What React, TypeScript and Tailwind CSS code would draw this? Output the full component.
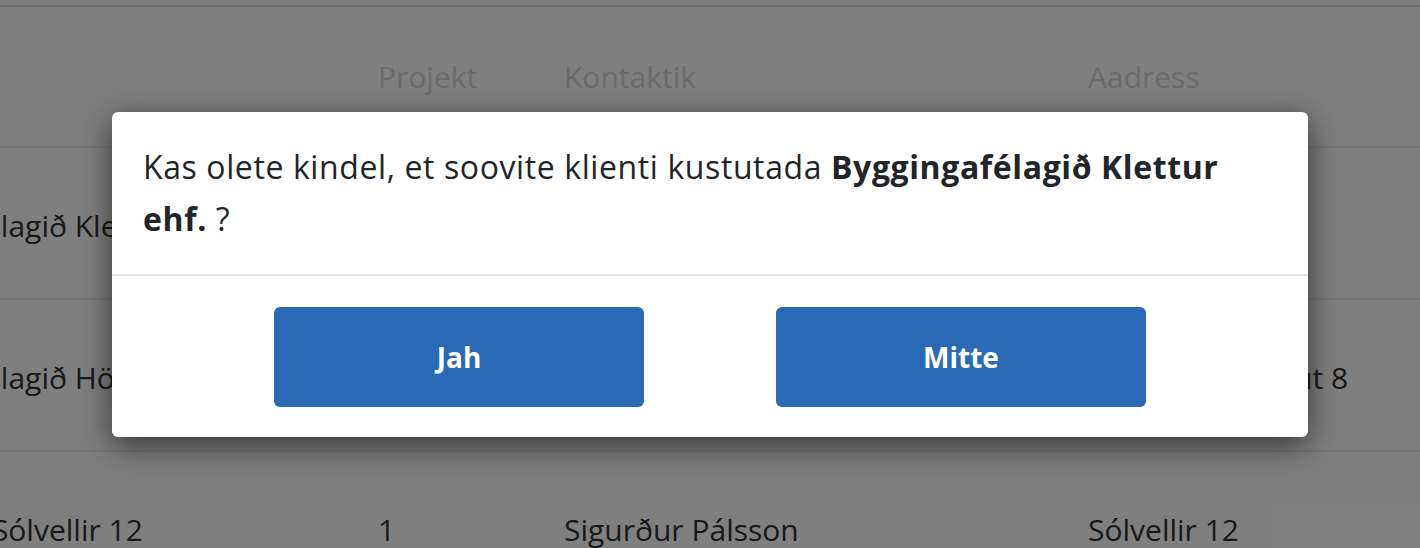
const rows = [
  { name: "Byggingafélagið Klettur ehf.", projects: "3", contact: "Jón Guðmundsson", address: "Borgartún 25" },
  { name: "Byggingafélagið Höfði ehf.", projects: "2", contact: "Anna Sigurðardóttir", address: "Suðurlandsbraut 8" },
  { name: "Fasteignir Sólvellir 12", projects: "1", contact: "Sigurður Pálsson", address: "Sólvellir 12" },
];

function ClientTable() {
  return (
    <div className="pt-[5px]">
      <div className="ml-[-152px] border-t-2 border-[#e2e2e2]">
        <div className="grid h-[141px] grid-cols-[530px_186px_524px_1fr] items-center border-b-2 border-[#eeeeee] text-[30px] text-[#d4d4d4]">
          <span>Klient</span>
          <span>Projekt</span>
          <span>Kontaktik</span>
          <span>Aadress</span>
        </div>
        {rows.map((r) => (
          <div
            key={r.name}
            className="grid h-[152px] grid-cols-[530px_186px_524px_1fr] items-center border-b-2 border-[#eeeeee] pt-[4px] text-[30px] text-[#333333]"
          >
            <span className="whitespace-nowrap">{r.name}</span>
            <span>{r.projects}</span>
            <span className="whitespace-nowrap">{r.contact}</span>
            <span className="whitespace-nowrap">{r.address}</span>
          </div>
        ))}
      </div>
    </div>
  );
}

export default function App() {
  return (
    <div className="relative h-[548px] w-full overflow-hidden bg-white font-['Open_Sans',sans-serif]">
      <ClientTable />

      <div className="absolute inset-0 flex items-center justify-center bg-black/50">
        <div className="w-[1196px] rounded-md bg-white shadow-[0_8px_32px_rgba(0,0,0,0.6)]">
          <div className="px-[31px] pt-[29px] pb-[29px] text-[32px] leading-[52px] tracking-[0.6px] text-[#212529]">
            Kas olete kindel, et soovite klienti kustutada <strong className="font-bold">Byggingafélagið Klettur ehf.</strong> ?
          </div>
          <div className="flex justify-center gap-[132px] border-t-2 border-[#e6e6e6] pt-[31px] pb-[30px]">
            <button className="h-[100px] w-[370px] rounded-md bg-[#2a69b5] text-[28px] font-bold text-white">
              Jah
            </button>
            <button className="h-[100px] w-[370px] rounded-md bg-[#2a69b5] text-[28px] font-bold text-white">
              Mitte
            </button>
          </div>
        </div>
      </div>
    </div>
  );
}
